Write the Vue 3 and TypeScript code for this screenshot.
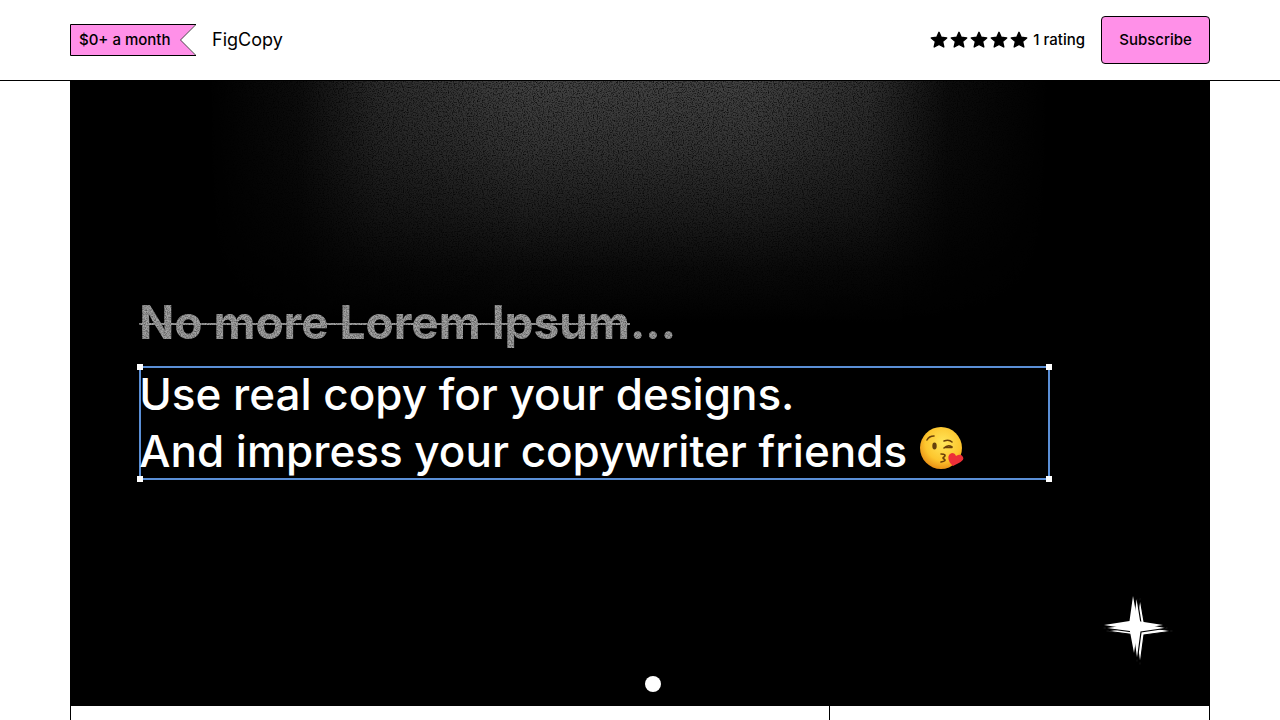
<script setup lang="ts">
import { ref } from 'vue'

const slides: string[] = ['Cover', 'Second preview']
const current = ref<number>(0)
const stars: number[] = [1, 2, 3, 4, 5]
</script>

<template>
  <div class="page">
    <header class="bar">
      <div class="wrap bar-inner">
        <div class="price">
          <svg class="tag" viewBox="0 0 126 32" preserveAspectRatio="none" aria-hidden="true">
            <path d="M125.5 .5H.5V31.5H125.5" fill="#ff90e8" stroke="none" />
            <path d="M126 0L110.500 16L126 32Z" fill="#fff" />
            <path d="M126 .5H.5V31.5H126" fill="none" stroke="#000" />
            <path d="M126 .5L110.500 16L126 31.500" fill="none" stroke="#000" stroke-width=".7" />
          </svg>
          <span>$0+ a month</span>
        </div>
        <h1 class="name">FigCopy</h1>
        <div class="rating">
          <svg v-for="s in stars" :key="s" class="star" viewBox="0 0 20 20" aria-hidden="true">
            <path
              d="M10 2.300L12.200 7.300L17.700 7.900L13.600 11.600L14.800 17L10 14.300L5.200 17L6.400 11.600L2.300 7.900L7.800 7.300Z"
              stroke="#000"
              stroke-width="1.400"
              stroke-linejoin="round"
            />
          </svg>
          <span class="count">1 rating</span>
        </div>
        <button class="subscribe" type="button">Subscribe</button>
      </div>
    </header>

    <main class="wrap product">
      <section class="cover" aria-label="Product preview">
        <svg class="glow" viewBox="0 0 1138 260" preserveAspectRatio="none" aria-hidden="true">
          <defs>
            <linearGradient id="fall" x1="0" y1="0" x2="0" y2="1">
              <stop offset="0" stop-color="#424242" />
              <stop offset=".25" stop-color="#333" />
              <stop offset=".5" stop-color="#1e1e1e" />
              <stop offset=".72" stop-color="#0a0a0a" />
              <stop offset=".92" stop-color="#000" />
            </linearGradient>
            <linearGradient id="side">
              <stop offset=".12" stop-color="#000" />
              <stop offset=".2" stop-color="#333" />
              <stop offset=".27" stop-color="#aaa" />
              <stop offset=".4" stop-color="#fff" />
              <stop offset=".6" stop-color="#fff" />
              <stop offset=".7" stop-color="#bbb" />
              <stop offset=".77" stop-color="#333" />
              <stop offset=".86" stop-color="#000" />
            </linearGradient>
            <mask id="beam" maskUnits="userSpaceOnUse" x="0" y="0" width="1138" height="260">
              <rect width="1138" height="260" fill="url(#side)" />
            </mask>
            <filter id="noise" x="0" y="0" width="100%" height="100%" color-interpolation-filters="sRGB">
              <feTurbulence type="fractalNoise" baseFrequency=".8" numOctaves="2" seed="4" result="n" />
              <feColorMatrix in="n" values="2 0 0 0 -.15  2 0 0 0 -.15  2 0 0 0 -.15  0 0 0 0 1" result="g" />
              <feComposite in="SourceGraphic" in2="g" operator="arithmetic" k1="1" />
            </filter>
            <filter id="grain" x="0" y="0" width="100%" height="100%" color-interpolation-filters="sRGB">
              <feTurbulence type="fractalNoise" baseFrequency=".8" numOctaves="2" seed="7" result="n" />
              <feColorMatrix in="n" values="1 0 0 0 .35  1 0 0 0 .35  1 0 0 0 .35  0 0 0 0 1" result="g" />
              <feComposite in="SourceGraphic" in2="g" operator="arithmetic" k1="1" />
            </filter>
          </defs>
          <g mask="url(#beam)">
            <rect width="1138" height="260" fill="url(#fall)" filter="url(#noise)" />
          </g>
        </svg>

        <div class="copy">
          <p class="old"><s>No more Lorem Ipsum</s>...</p>
          <div class="selection">
            <p class="new">Use real copy for your designs.</p>
            <p class="new">
              And impress your copywriter friends
              <svg class="kiss" viewBox="0 0 46 46" role="img" aria-label="Face blowing a kiss">
                <defs>
                  <radialGradient id="face" cx=".55" cy=".38" r=".65">
                    <stop offset="0" stop-color="#ffe65a" />
                    <stop offset=".65" stop-color="#fdc62e" />
                    <stop offset="1" stop-color="#e78b12" />
                  </radialGradient>
                </defs>
                <circle cx="22" cy="22" r="21" fill="url(#face)" />
                <g fill="none" stroke="#6b4009" stroke-linecap="round" stroke-width="1.600">
                  <path d="M8 14Q10 10 15 10" />
                  <path d="M25 15Q30 13 33 16" />
                  <path d="M25 22Q29 18 33 21M26 21.500L33 21.500" />
                  <path d="M22 28Q28 28 25 31Q23 32 25 33Q28 35 22 36" />
                </g>
                <ellipse cx="15.500" cy="20" rx="2.200" ry="3.400" fill="#65400c" />
                <path d="M34 40C28 35 28 28 33 27Q36 27 37 30Q42 27 44 31C46 35 39 37 34 40Z" fill="#ed3038" />
              </svg>
            </p>
            <i class="handle tl"></i><i class="handle tr"></i><i class="handle bl"></i><i class="handle br"></i>
          </div>
        </div>

        <svg class="spark" viewBox="0 0 66 66" aria-hidden="true">
          <g fill="#fff" stroke="#000" stroke-width="1.200">
            <path d="M37 3L42 32L70 36L41 40L37 70L33 40L3 36L33 32Z" />
            <path d="M33.500 0L38 28L65 33L38 37L34 67L30 37L0 33L30 29Z" />
          </g>
          <path d="M30 1L34.500 26L60 30L34.500 34L31 58L26.500 34L1 30L26.500 26Z" fill="#fff" />
        </svg>

        <div class="dots" role="tablist" aria-label="Previews">
          <button
            v-for="(slide, i) in slides"
            :key="slide"
            type="button"
            role="tab"
            class="dot"
            :class="{ active: current === i }"
            :aria-selected="current === i"
            :aria-label="slide"
            @click="current = i"
          ></button>
        </div>
      </section>
      <div class="details">
        <section class="about"></section>
        <aside class="buy"></aside>
      </div>
    </main>
  </div>
</template>

<style scoped>
.page {
  height: 100vh;
  overflow: hidden;
  background: #fff;
  color: #000;
  font: 500 15px/24px Inter, "Liberation Sans", sans-serif;
}
.wrap {
  box-sizing: border-box;
  max-width: 1140px;
  margin: 0 auto;
}
.bar {
  border-bottom: 1px solid #000;
}
.bar-inner {
  display: flex;
  align-items: center;
  gap: 16px;
  padding: 16px 0;
}
.price {
  position: relative;
  box-sizing: border-box;
  width: 126px;
  padding: 4px 9px;
  white-space: nowrap;
}
.price span {
  position: relative;
}
.tag {
  position: absolute;
  inset: 0;
  width: 100%;
  height: 100%;
}
.name {
  flex: 1;
  margin: 0;
  font-size: 18px;
  font-weight: 400;
}
.rating {
  display: flex;
  align-items: center;
}
.star {
  width: 20px;
  height: 20px;
}
.count {
  margin-left: 4px;
}
.subscribe {
  min-width: 109px;
  padding: 11px 16px;
  border: 1px solid #000;
  border-radius: 4px;
  background: #ff90e8;
  color: #000;
  font: inherit;
  cursor: pointer;
}
.product {
  border: solid #000;
  border-width: 0 1px;
}
.cover {
  position: relative;
  display: flex;
  align-items: center;
  box-sizing: border-box;
  aspect-ratio: 1138 / 625;
  padding: 0 14% 14px 6%;
  background: #000;
  overflow: hidden;
}
.glow {
  position: absolute;
  top: 0;
  left: 0;
  width: 100%;
  height: 42%;
}
.copy {
  position: relative;
  flex: 1;
  color: #fff;
  font-size: 44px;
  line-height: 57px;
}
.old {
  margin: 0 0 15px;
  color: #a4a4a4;
  font-size: 46px;
  font-weight: 700;
  filter: url(#grain);
}
.old s {
  text-decoration-thickness: 2px;
}
.selection {
  position: relative;
  box-shadow: inset 0 0 0 2px #5b8fd6;
}
.new {
  height: 57px;
  margin: 0;
  font-weight: 500;
  white-space: nowrap;
}
.kiss {
  width: 46px;
  height: 46px;
  vertical-align: -5px;
}
.handle {
  position: absolute;
  width: 6px;
  height: 6px;
  background: #fff;
}
.tl { top: -2px; left: -2px; }
.tr { top: -2px; right: -2px; }
.bl { bottom: -2px; left: -2px; }
.br { bottom: -2px; right: -2px; }
.spark {
  position: absolute;
  right: 40px;
  bottom: 45px;
  width: 66px;
  height: 66px;
  overflow: visible;
}
.dots {
  position: absolute;
  right: 0;
  bottom: 14px;
  left: 0;
  display: flex;
  justify-content: center;
  gap: 10px;
}
.dot {
  width: 16px;
  height: 16px;
  padding: 0;
  border: 0;
  border-radius: 50%;
  background: #fff;
  cursor: pointer;
}
.dot.active {
  background: #000;
}
.details {
  display: grid;
  grid-template-columns: 2fr minmax(380px, 1fr);
  min-height: 100px;
}
.buy {
  border-left: 1px solid #000;
}
</style>
